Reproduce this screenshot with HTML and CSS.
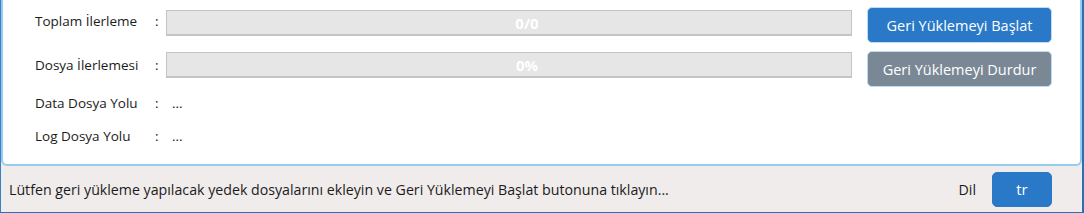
FILE: index.html
```html
<!DOCTYPE html>
<html>
<head>
  <meta charset="UTF-8" />
  <title>Geri Yükleme</title>
  <link rel="stylesheet" href="styles.css">
</head>
<body>
  <div class="window">
    <div class="panel">
      <div class="label">Toplam İlerleme</div>
      <div class="colon">:</div>
      <div class="bar"><span>0/0</span></div>
      <button class="btn btn-start">Geri Yüklemeyi Başlat</button>

      <div class="label">Dosya İlerlemesi</div>
      <div class="colon">:</div>
      <div class="bar second"><span>0%</span></div>
      <button class="btn btn-stop">Geri Yüklemeyi Durdur</button>

      <div class="label path">Data Dosya Yolu</div>
      <div class="colon path">:</div>
      <div class="value path">...</div>

      <div class="label path">Log Dosya Yolu</div>
      <div class="colon path">:</div>
      <div class="value path">...</div>
    </div>
    <div class="status">
      <div class="message">Lütfen geri yükleme yapılacak yedek dosyalarını ekleyin ve Geri Yüklemeyi Başlat butonuna tıklayın...</div>
      <div class="lang-label">Dil</div>
      <button class="btn btn-lang">tr</button>
    </div>
  </div>
</body>
</html>
```
FILE: styles.css
```css
html, body {
  margin: 0;
  padding: 0;
  height: 100%;
}
body {
  font-family: "Open Sans", "Noto Sans", sans-serif;
  color: #1b1b1b;
  background: #ffffff;
}
.window {
  height: 213px;
  box-sizing: border-box;
  background: #f0ecec;
  border-left: 1px solid #3d7fc4;
  border-right: 2px solid #2d6fb5;
  border-bottom: 1px solid #2d6fb5;
  display: flex;
  flex-direction: column;
}
.panel {
  height: 166px;
  box-sizing: border-box;
  background: #ffffff;
  border: 2px solid #94cdee;
  border-top: none;
  border-radius: 0 0 6px 6px;
  padding: 7px 28px 0 32px;
  display: grid;
  grid-template-columns: 120px 11px 1fr 185px;
  grid-template-rows: 44px 36px 32px 34px;
  font-size: 13.5px;
}
.label, .colon, .value {
  align-self: start;
  line-height: 28px;
}
.label.path, .colon.path, .value.path {
  align-self: center;
}
.value {
  grid-column: 3 / 5;
  padding-left: 6px;
}
.bar {
  align-self: start;
  margin-top: 3px;
  margin-right: 15px;
  height: 26px;
  box-sizing: border-box;
  background: #e6e6e6;
  border: 1px solid #c4c4c4;
  border-bottom-width: 2px;
  display: flex;
  align-items: center;
  justify-content: center;
  color: #ffffff;
  font-weight: bold;
  font-size: 15px;
}
.bar.second {
  margin-top: 1px;
}
.bar span {
  padding-left: 36px;
}
.btn {
  border: 1px solid #bcdcf5;
  border-radius: 5px;
  color: #ffffff;
  font-family: inherit;
  font-size: 14.5px;
  padding: 0;
  cursor: pointer;
  height: 36px;
  align-self: start;
}
.btn-start {
  background: #2979c8;
}
.btn-stop {
  background: #7a8896;
}
.status {
  flex: 1;
  display: flex;
  align-items: center;
  padding: 0 30px 0 8px;
  font-size: 14.2px;
}
.message {
  flex: 1;
}
.lang-label {
  margin-right: 16px;
}
.btn-lang {
  width: 60px;
  height: 35px;
  align-self: center;
  background: #2979c8;
  border-color: #2979c8;
  font-size: 15px;
}
```
